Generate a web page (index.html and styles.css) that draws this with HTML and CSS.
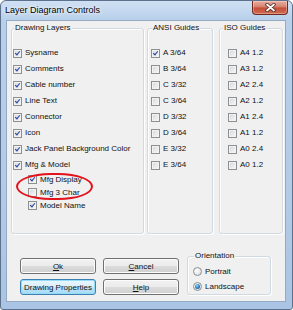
FILE: index.html
```html
<!DOCTYPE html>
<html lang="en">
<head>
  <meta charset="UTF-8" />
  <title>Layer Diagram Controls</title>
  <link rel="stylesheet" href="styles.css">
</head>
<body>
  <div class="window">
    <div class="titlebar">
      <span class="title">Layer Diagram Controls</span>
      <span class="close-btn">
        <svg width="11" height="9" viewBox="0 0 11 9">
          <path d="M2 1.5 L9 7.5 M9 1.5 L2 7.5" stroke="#4a2620" stroke-width="3.4" stroke-linecap="round" />
          <path d="M2 1.5 L9 7.5 M9 1.5 L2 7.5" stroke="#fff" stroke-width="1.8" stroke-linecap="round" />
        </svg>
      </span>
    </div>

    <div class="client">
      <div class="groups">
        <fieldset class="group layers">
          <legend>Drawing Layers</legend>
          <div class="item"><span class="box on"></span>Sysname</div>
          <div class="item"><span class="box on"></span>Comments</div>
          <div class="item"><span class="box on"></span>Cable number</div>
          <div class="item"><span class="box on"></span>Line Text</div>
          <div class="item"><span class="box on"></span>Connector</div>
          <div class="item"><span class="box on"></span>Icon</div>
          <div class="item"><span class="box on"></span>Jack Panel Background Color</div>
          <div class="item"><span class="box on"></span>Mfg &amp; Model</div>
          <div class="sub">
            <div class="item small"><span class="box on"></span>Mfg Display</div>
            <div class="item small"><span class="box"></span>Mfg 3 Char</div>
            <div class="item small"><span class="box on"></span>Model Name</div>
            <span class="mark"></span>
          </div>
        </fieldset>

        <fieldset class="group ansi">
          <legend>ANSI Guides</legend>
          <div class="item"><span class="box on"></span>A 3/64</div>
          <div class="item"><span class="box"></span>B 3/64</div>
          <div class="item"><span class="box"></span>C 3/32</div>
          <div class="item"><span class="box"></span>C 3/64</div>
          <div class="item"><span class="box"></span>D 3/32</div>
          <div class="item"><span class="box"></span>D 3/64</div>
          <div class="item"><span class="box"></span>E 3/32</div>
          <div class="item"><span class="box"></span>E 3/64</div>
        </fieldset>

        <fieldset class="group iso">
          <legend>ISO Guides</legend>
          <div class="item"><span class="box"></span>A4 1.2</div>
          <div class="item"><span class="box"></span>A3 1.2</div>
          <div class="item"><span class="box"></span>A2 2.4</div>
          <div class="item"><span class="box"></span>A2 1.2</div>
          <div class="item"><span class="box"></span>A1 2.4</div>
          <div class="item"><span class="box"></span>A1 1.2</div>
          <div class="item"><span class="box"></span>A0 2.4</div>
          <div class="item"><span class="box"></span>A0 1.2</div>
        </fieldset>
      </div>

      <div class="bottom">
        <div class="buttons">
          <button class="btn"><u>O</u>k</button>
          <button class="btn"><u>C</u>ancel</button>
          <button class="btn default">Drawing Properties</button>
          <button class="btn"><u>H</u>elp</button>
        </div>
        <fieldset class="group orient">
          <legend>Orientation</legend>
          <div class="item row"><span class="radio"></span>Portrait</div>
          <div class="item row"><span class="radio on"></span>Landscape</div>
        </fieldset>
      </div>
    </div>
  </div>
</body>
</html>
```

FILE: styles.css
```css
body {
  margin: 0;
  font-family: "Liberation Sans", Arial, sans-serif;
  font-size: 8px;
  color: #111;
}
.window {
  width: 293px;
  height: 310px;
  box-sizing: border-box;
  display: flex;
  flex-direction: column;
  padding: 0 6px 7px 5px;
  border: 1px solid #5d718c;
  border-radius: 6px 6px 3px 3px;
  background: linear-gradient(180deg, #cfe0f3 0px, #b8d0eb 19px, #b3cbe7 60%, #a9c4e4 100%);
}
.titlebar {
  display: flex;
  justify-content: space-between;
  align-items: flex-start;
  height: 19px;
  margin: 0 -6px 0 -5px;
}
.title {
  padding: 4px 0 0 4px;
  font-size: 9px;
  line-height: 11px;
  color: #000;
  text-shadow: 0 0 5px #fff, 0 0 3px #fff;
}
.close-btn {
  display: flex;
  align-items: center;
  justify-content: center;
  width: 36px;
  height: 14px;
  margin-right: 4px;
  box-sizing: border-box;
  border: 1px solid #6e2b22;
  border-top: none;
  border-radius: 0 0 4px 4px;
  background: linear-gradient(180deg, #e9ab9b 0%, #d98a78 40%, #c4503a 55%, #cf6a4d 100%);
  box-shadow: inset 0 0 0 1px rgba(255,255,255,0.3);
}
.client {
  flex: 1;
  background: #f0f0f0;
  border: 1px solid #93a9c4;
}
.groups {
  display: flex;
  height: 211px;
  margin: 2px 0 0 4px;
}
.group {
  box-sizing: border-box;
  min-width: 0;
  margin: 0;
  padding: 12px 0 0 1px;
  border: 1px solid #d0dae2;
  border-radius: 3px;
  box-shadow: inset 1px 1px 0 #fff, 1px 1px 0 #fff;
}
.group legend {
  margin-left: 1px;
  padding: 0 1px;
  line-height: 10px;
  background: #f0f0f0;
  color: #111;
}
.layers {
  width: 133px;
}
.ansi {
  width: 66px;
  margin-left: 3px;
  padding-left: 3px;
}
.iso {
  width: 64px;
  margin-left: 6px;
  padding-left: 8px;
}
.iso legend {
  margin-left: -5px;
}
.item {
  display: flex;
  align-items: center;
  height: 16px;
  line-height: 10px;
  white-space: nowrap;
}
.item.small {
  height: 13px;
}
.sub {
  position: relative;
  padding-left: 15px;
}
.mark {
  position: absolute;
  left: 3px;
  top: 0;
  width: 77px;
  height: 27px;
  box-sizing: border-box;
  border: 2px solid #e3121b;
  border-radius: 45% / 50%;
}
.box {
  display: grid;
  place-items: center;
  width: 9px;
  height: 9px;
  margin-right: 3px;
  box-sizing: border-box;
  border: 1px solid #8e8f8f;
  background: linear-gradient(135deg, #d3d7dc, #f9f9f9);
  box-shadow: inset 0 0 0 1px #f2f2f2;
}
.box.on::after {
  content: "";
  width: 2px;
  height: 4px;
  border: solid #23409c;
  border-width: 0 1.6px 1.6px 0;
  transform: translate(0, -1px) rotate(40deg);
}
.bottom {
  display: flex;
  align-items: flex-start;
  margin-top: 17px;
  padding-left: 13px;
}
.buttons {
  display: grid;
  grid-template-columns: 76px 76px;
  grid-auto-rows: 16px;
  gap: 5px 7px;
  margin-top: 7px;
}
.btn {
  margin: 0;
  padding: 0;
  font-family: inherit;
  font-size: 8px;
  color: #111;
  border: 1px solid #707070;
  border-radius: 3px;
  background: linear-gradient(180deg, #f2f2f2 0%, #ebebeb 50%, #dddddd 50%, #cfcfcf 100%);
  box-shadow: inset 0 0 0 1px #fcfcfc;
}
.btn u {
  text-underline-offset: 1px;
}
.btn.default {
  border-color: #3c7fb1;
  background: linear-gradient(180deg, #eaf6fd 0%, #d9f0fc 50%, #bee6fd 50%, #a7d9f5 100%);
  box-shadow: inset 0 0 0 1px #94dcf8;
}
.orient {
  width: 84px;
  height: 44px;
  margin-left: 8px;
  padding: 3px 0 0 5px;
}
.item.row {
  height: 15px;
}
.radio {
  display: grid;
  place-items: center;
  width: 9px;
  height: 9px;
  margin-right: 3px;
  box-sizing: border-box;
  border: 1px solid #8e8f8f;
  border-radius: 50%;
  background: radial-gradient(circle at 35% 35%, #fdfdfd, #d6d9dd);
}
.radio.on::after {
  content: "";
  width: 5px;
  height: 5px;
  border-radius: 50%;
  background: radial-gradient(circle at 40% 35%, #8fd3fa, #1f74b8 60%, #154e7e);
}
```
